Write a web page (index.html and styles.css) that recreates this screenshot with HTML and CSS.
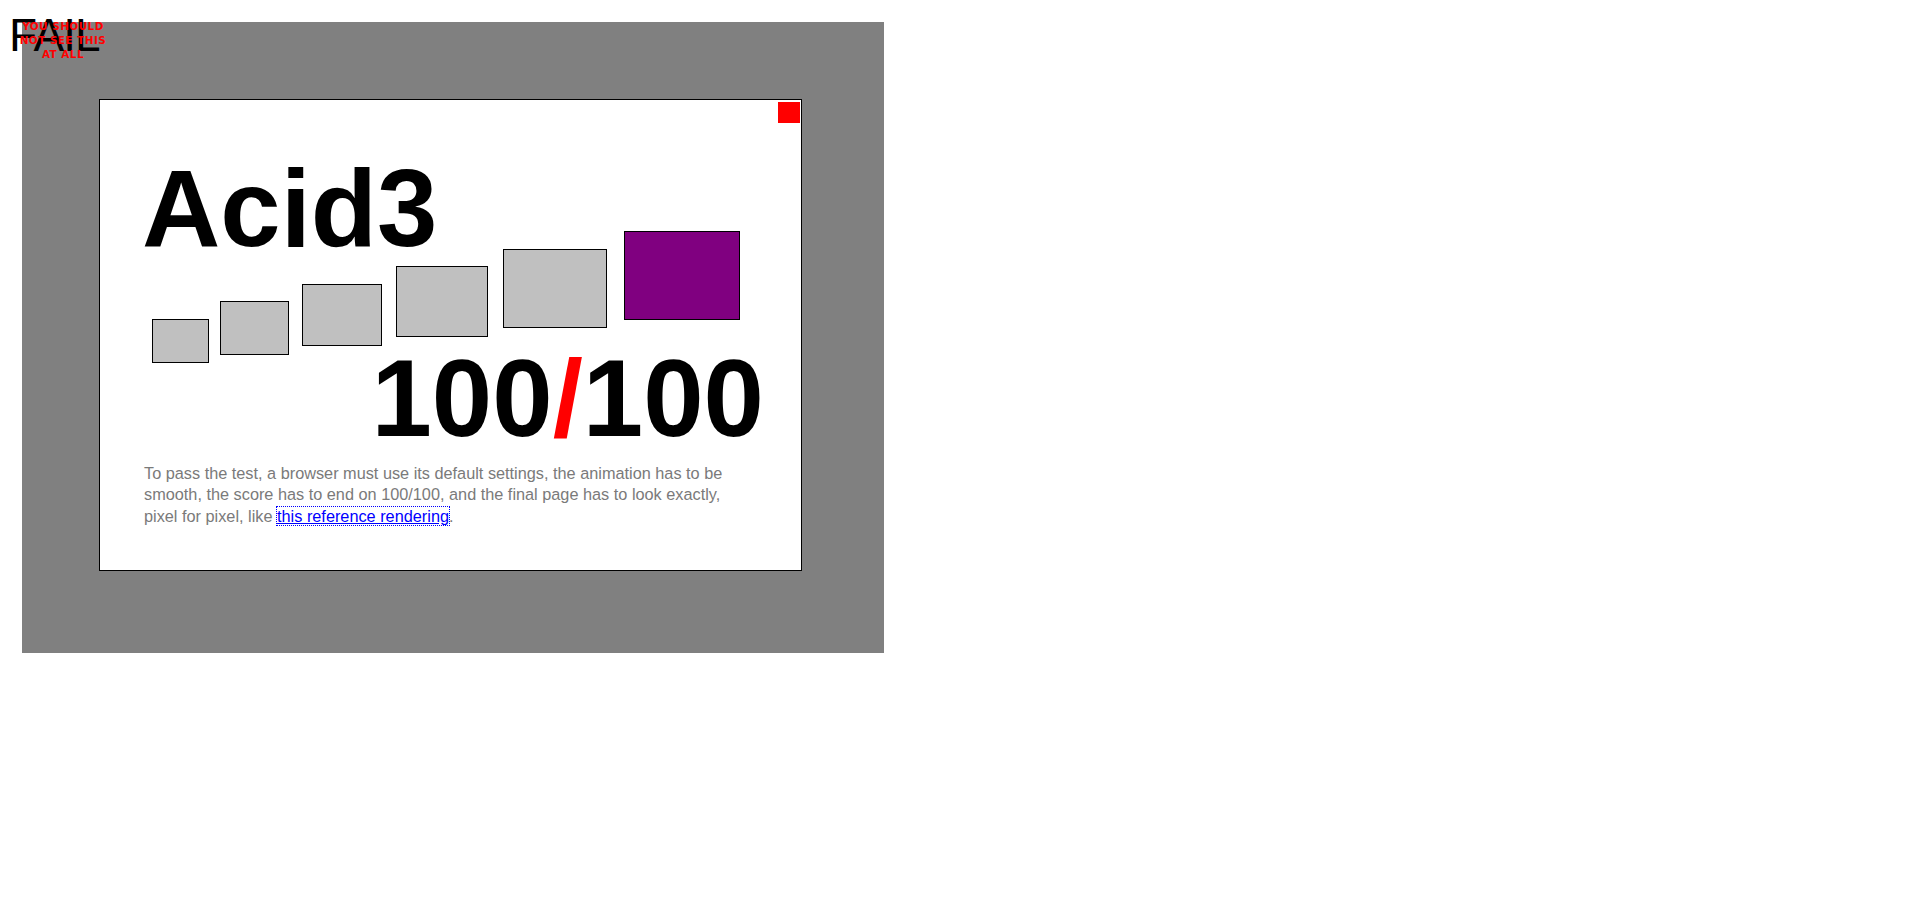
FILE: index.html
```html
<!DOCTYPE html>
<html>
<head>
<meta charset="utf-8">
<title>The Acid3 Test</title>
<link rel="stylesheet" href="styles.css">
</head>
<body>
<div class="fail">FAIL</div>
<div class="warn">YOU SHOULD<br>NOT SEE THIS<br>AT ALL</div>
<div class="stage">
  <div class="card">
    <div class="flag"></div>
    <h1 class="title">Acid3</h1>
    <div class="buckets">
      <div class="bucket b1"></div>
      <div class="bucket b2"></div>
      <div class="bucket b3"></div>
      <div class="bucket b4"></div>
      <div class="bucket b5"></div>
      <div class="bucket b6"></div>
    </div>
    <div class="score">100<span class="slash">/</span>100</div>
    <p class="note">To pass the test, a browser must use its default settings, the animation has to be smooth, the score has to end on 100/100, and the final page has to look exactly, pixel for pixel, like <a class="ref" href="#">this reference rendering</a>.</p>
  </div>
</div>
</body>
</html>
```
FILE: styles.css
```css
html, body {
  margin: 0;
  padding: 0;
  background: #fff;
}
body {
  font-family: "Liberation Sans", Arial, sans-serif;
}
.stage {
  margin: 22px;
  width: 862px;
  height: 631px;
  box-sizing: border-box;
  padding: 77px 0 0 77px;
  background: #808080;
}
.card {
  position: relative;
  width: 703px;
  height: 472px;
  box-sizing: border-box;
  border: 1px solid #000;
  background: #fff;
  padding: 54px 37px 0 44px;
}
.flag {
  position: absolute;
  top: 2px;
  right: 1px;
  width: 22px;
  height: 21px;
  background: #f00;
}
.title {
  margin: 0 0 0 -2px;
  font: bold 108.5px/109px "Liberation Sans", Arial, sans-serif;
  color: #000;
}
.buckets {
  display: flex;
  align-items: flex-start;
  margin-top: -32px;
  height: 132px;
}
.bucket {
  flex: none;
  box-sizing: border-box;
  border: 1px solid #000;
  background: #c0c0c0;
}
.b1 { margin: 88px 0 0 8px; width: 57px; height: 44px; }
.b2 { margin: 70px 0 0 11px; width: 69px; height: 54px; }
.b3 { margin: 53px 0 0 13px; width: 80px; height: 62px; }
.b4 { margin: 35px 0 0 14px; width: 92px; height: 71px; }
.b5 { margin: 18px 0 0 15px; width: 104px; height: 79px; }
.b6 { margin: 0 0 0 17px; width: 116px; height: 89px; background: #800080; }
.score {
  margin-top: -19px;
  font: bold 108.6px/110px "Liberation Sans", Arial, sans-serif;
  text-align: right;
  color: #000;
}
.slash {
  color: #f00;
}
.note {
  margin: 9px 20px 0 0;
  font-size: 16.3px;
  line-height: 21.3px;
  color: #7a7a7a;
}
.ref {
  color: #00f;
  outline: 1px dotted #00f;
}
.fail {
  position: absolute;
  left: 9px;
  top: 8px;
  z-index: 1;
  font: 46px/normal "Liberation Sans", Arial, sans-serif;
  letter-spacing: -1px;
  color: #000;
}
.warn {
  position: absolute;
  left: 19px;
  top: 19px;
  width: 88px;
  z-index: 2;
  text-align: center;
  font: bold 10.4px/14px "DejaVu Sans", sans-serif;
  letter-spacing: 0.5px;
  color: #f00;
}
```
